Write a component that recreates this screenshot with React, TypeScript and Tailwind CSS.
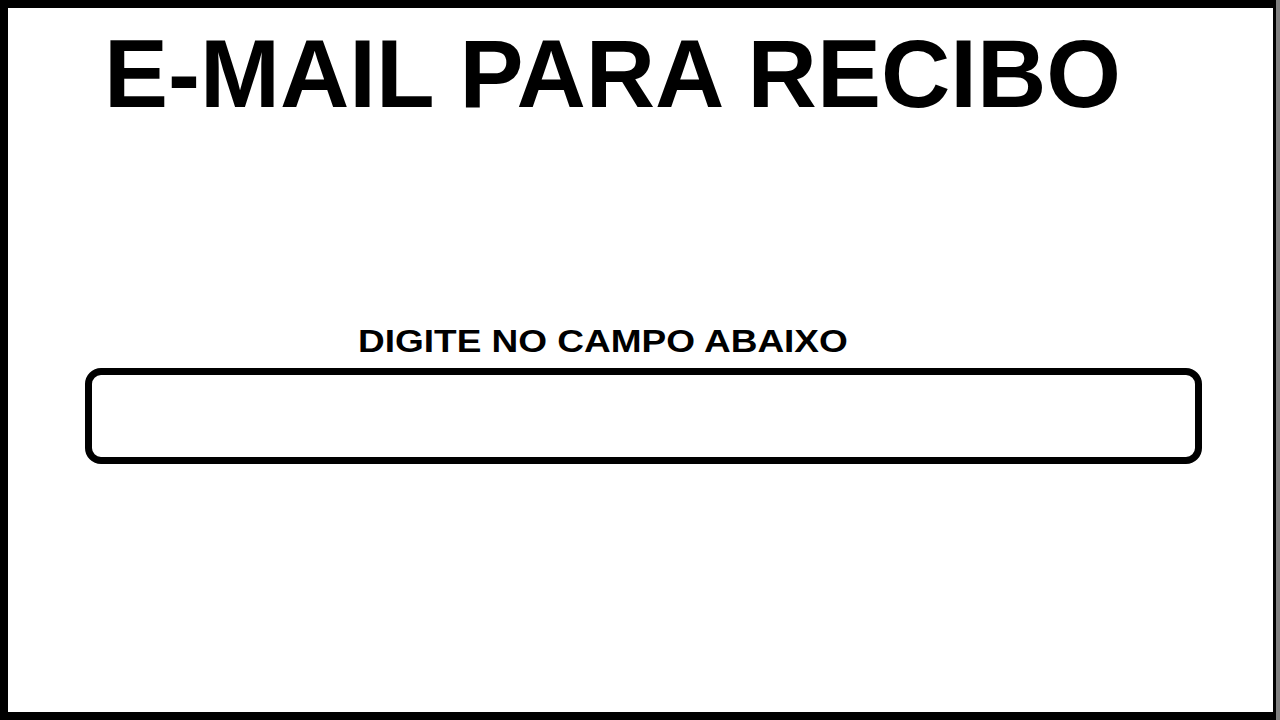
export default function App() {
  return (
    <div
      className="w-[1280px] h-[720px] bg-[#808080] flex overflow-hidden"
      style={{ fontFamily: '"Liberation Sans", Arial, sans-serif' }}
    >
      <div className="w-[1276px] h-[720px] bg-white border-black border-l-8 border-t-8 border-b-8 border-r-[3px] flex flex-col">
        <h1 className="ml-[96px] mt-[18px] h-[96px] text-[96px] font-bold leading-none text-black whitespace-nowrap">
          E-MAIL PARA RECIBO
        </h1>
        <p className="ml-[350px] mt-[203px] h-[32px] text-[32px] font-bold leading-none text-black whitespace-nowrap origin-left scale-x-[1.156]">
          DIGITE NO CAMPO ABAIXO
        </p>
        <div className="ml-[77px] mt-[11px] w-[1117px] h-[96px] border-[7px] border-black rounded-[16px] bg-white" />
      </div>
    </div>
  );
}
